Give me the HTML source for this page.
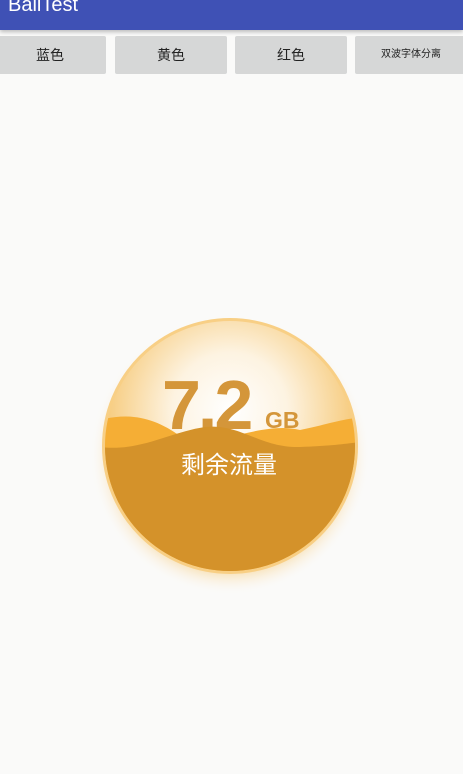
<!DOCTYPE html>
<html><head><meta charset="utf-8"><style>
body{margin:0;width:463px;height:774px;background:#FAFAF9;overflow:hidden;position:relative;font-family:"Liberation Sans","Noto Sans CJK SC",sans-serif}
.bar{position:absolute;left:0;top:0;width:463px;height:30px;background:#3F51B5;box-shadow:0 2px 4px rgba(0,0,0,.25)}
.bar span{position:absolute;left:8px;top:-6px;color:#fff;font-size:20px}
.b{position:absolute;top:36px;height:38px;background:#D6D7D7;border-radius:2px;font-size:14px;color:#222;text-align:center;line-height:38px}
</style></head><body>
<div class="bar"><span>BallTest</span></div>
<div class="b" style="left:-6px;width:112px">蓝色</div>
<div class="b" style="left:115px;width:112px">黄色</div>
<div class="b" style="left:235px;width:112px">红色</div>
<div class="b" style="left:355px;width:112px;font-size:10px">双波字体分离</div>
<svg width="463" height="774" style="position:absolute;left:0;top:0">
<defs>
<radialGradient id="bg" cx="230" cy="410" r="128" gradientUnits="userSpaceOnUse">
<stop offset="0" stop-color="#FFFFFF"/><stop offset="0.45" stop-color="#FDF3E1"/><stop offset="1" stop-color="#F6C978"/></radialGradient>
<radialGradient id="sh" cx="230" cy="455" r="140" gradientUnits="userSpaceOnUse">
<stop offset="0.85" stop-color="#F8D9A0" stop-opacity=".6"/><stop offset="1" stop-color="#FAFAF9" stop-opacity="0"/></radialGradient>
<clipPath id="c"><circle cx="230" cy="446" r="125"/></clipPath>
</defs>
<circle cx="230" cy="455" r="140" fill="url(#sh)"/>
<circle cx="230" cy="446" r="128" fill="#F8CF85"/>
<circle cx="230" cy="446" r="125" fill="url(#bg)"/>
<text x="162" y="429" font-family="Liberation Sans" font-weight="bold" font-size="70" letter-spacing="-3" fill="#D4963A">7.2</text>
<text x="265" y="428" font-family="Liberation Sans" font-weight="bold" font-size="23" fill="#D4963A">GB</text>
<g clip-path="url(#c)">
<path d="M100 420 C130 412 155 418 180 436 C210 452 260 420 300 430 C325 425 345 418 360 418 L360 580 L100 580Z" fill="#F5AE35"/>
<path d="M100 447 C140 452 170 432 205 427 C240 423 260 448 300 447 C330 446 345 444 360 442 L360 580 L100 580Z" fill="#D4922A"/>
</g>
<text x="229" y="473" text-anchor="middle" font-family="Noto Sans CJK SC,sans-serif" font-size="24" fill="#fff">剩余流量</text>
</svg>
</body></html>
